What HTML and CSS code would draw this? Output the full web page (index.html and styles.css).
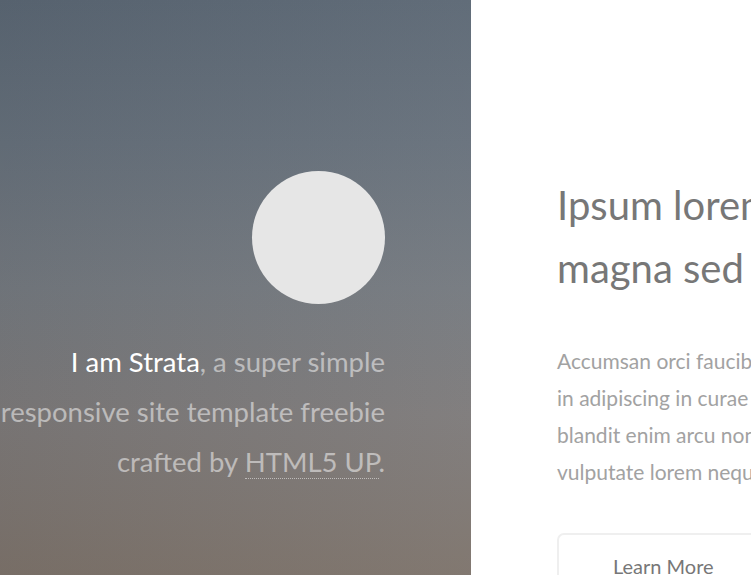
FILE: index.html
```html
<!DOCTYPE html>
<html lang="en">
<head>
<meta charset="utf-8">
<title>Strata</title>
<link rel="stylesheet" href="styles.css">
</head>
<body>
<header class="header">
  <div class="avatar"></div>
  <h1 class="intro"><strong class="name">I am Strata</strong>, a super simple<br>responsive site template freebie<br>crafted by <a class="link" href="#">HTML5 UP</a>.</h1>
</header>
<main class="main">
  <h2 class="title">Ipsum lorem dolor aliquam ante commodo<br>magna sed accumsan arcu neque.</h2>
  <p class="text">Accumsan orci faucibus id eu lorem semper. Eu ac iaculis ac nunc nisi lorem<br>in adipiscing in curae lobortis tortor primis integer massa adipiscing<br>blandit enim arcu non at amet id arcu magna. Accumsan orci faucibus id eu<br>vulputate lorem neque cubilia.</p>
  <a class="button" href="#">Learn More</a>
</main>
</body>
</html>
```
FILE: styles.css
```css
html, body {
  margin: 0;
  padding: 0;
  height: 575px;
  overflow: hidden;
}
body {
  display: flex;
  font-family: Lato, "Liberation Sans", sans-serif;
  background: #fff;
}
.header {
  flex: none;
  width: 471px;
  height: 575px;
  box-sizing: border-box;
  padding: 171px 86px 0 0;
  display: flex;
  flex-direction: column;
  align-items: flex-end;
  background:
    linear-gradient(90deg, rgba(0,0,0,0.03), rgba(255,255,255,0.05)),
    linear-gradient(180deg, #596572 0%, #646e79 25%, #72777d 50%, #7b7878 72%, #7b7169 100%);
}
.avatar {
  width: 133px;
  height: 133px;
  border-radius: 50%;
  background: #e6e6e6;
}
.intro {
  margin: 33px 0 0;
  font-size: 27.5px;
  line-height: 50px;
  font-weight: 400;
  text-align: right;
  color: rgba(255,255,255,0.5);
  white-space: nowrap;
}
.name {
  color: #fff;
  font-weight: 400;
}
.link {
  color: inherit;
  text-decoration: none;
  border-bottom: 1px dotted rgba(255,255,255,0.5);
}
.main {
  flex: none;
  padding: 174px 0 0 86px;
  white-space: nowrap;
}
.title {
  margin: 0;
  font-size: 40px;
  line-height: 63px;
  font-weight: 400;
  color: #777;
}
.text {
  margin: 42px 0 0;
  font-size: 21px;
  line-height: 37px;
  color: #a2a2a2;
}
.button {
  display: inline-block;
  margin-top: 43px;
  height: 63px;
  line-height: 63px;
  padding: 0 54px;
  border: 2px solid #efefef;
  border-radius: 7px;
  font-size: 20px;
  color: #777;
  text-decoration: none;
}
```
